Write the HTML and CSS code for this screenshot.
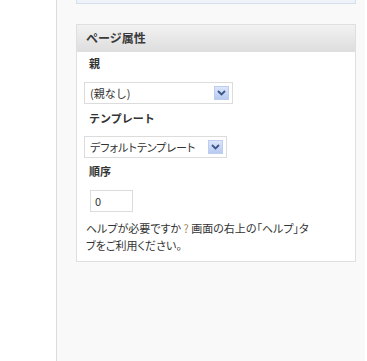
FILE: index.html
```html
<!DOCTYPE html>
<html lang="ja">
<head>
    <meta charset="UTF-8">
    <title>ページ属性</title>
    <link rel="stylesheet" href="styles.css">
</head>
<body>
    <div class="page">
        <div class="sidebar"></div>
        <div class="main">
            <div class="top-box"></div>

            <div class="postbox">
                <h3 class="postbox-title">ページ属性</h3>
                <div class="postbox-inside">
                    <p class="field-label">親</p>
                    <div class="select select-parent">
                        <span class="select-text">(親なし)</span>
                        <span class="select-btn">
                            <svg width="9" height="6" viewBox="0 0 9 6"><path d="M1 1 L4.5 4.5 L8 1" fill="none" stroke="#3d5688" stroke-width="1.8"/></svg>
                        </span>
                    </div>

                    <p class="field-label">テンプレート</p>
                    <div class="select select-template">
                        <span class="select-text">デフォルトテンプレート</span>
                        <span class="select-btn">
                            <svg width="9" height="6" viewBox="0 0 9 6"><path d="M1 1 L4.5 4.5 L8 1" fill="none" stroke="#3d5688" stroke-width="1.8"/></svg>
                        </span>
                    </div>

                    <p class="field-label">順序</p>
                    <input class="order-input" type="text" value="0">

                    <p class="help">ヘルプが必要ですか <span class="help-mark">?</span> 画面の右上の「ヘルプ」タ<br>ブをご利用ください。</p>
                </div>
            </div>
        </div>
    </div>
</body>
</html>
```
FILE: styles.css
```css
:root {
    --text-color: #333;
    --border-color: #dfdfdf;
    --bg-color: #f9f9f9;
}
body, html {
    margin: 0;
    padding: 0;
    height: 100%;
    font-family: "Noto Sans CJK JP", "Noto Sans", sans-serif;
    color: var(--text-color);
}
.page {
    display: flex;
    height: 100%;
}
.sidebar {
    width: 56px;
    background-color: #fff;
    border-right: 1px solid #dcdcdc;
}
.main {
    width: 309px;
    background-color: var(--bg-color);
    padding: 0 0 0 19px;
    box-sizing: border-box;
    border-right: 1px solid #fff;
}
.top-box {
    width: 280px;
    height: 4px;
    box-sizing: border-box;
    background-color: #eef3fa;
    border: 1px solid #d5dfeb;
    border-top: none;
    margin-bottom: 20px;
}
.postbox {
    width: 280px;
    box-sizing: border-box;
    background-color: #fff;
    border: 1px solid var(--border-color);
}
.postbox-title {
    margin: 0;
    height: 26px;
    line-height: 25px;
    padding-left: 9px;
    font-size: 12px;
    font-weight: 700;
    color: #3a3a3a;
    background: linear-gradient(to bottom, #f2f2f2, #dedede);
    border-bottom: 1px solid var(--border-color);
}
.postbox-inside {
    padding: 3px 10px 7px 7px;
}
.field-label {
    margin: 0;
    padding-left: 5px;
    font-size: 11px;
    font-weight: 700;
    line-height: 16px;
}
.select {
    display: flex;
    align-items: center;
    justify-content: space-between;
    height: 22px;
    box-sizing: border-box;
    border: 1px solid #dcdcdc;
    padding: 0 3px 0 5px;
    font-size: 11px;
}
.select-parent {
    width: 149px;
    margin: 11px 0 6px;
}
.select-template {
    width: 143px;
    margin: 10px 0 5px;
}
.select-template .select-text {
    font-feature-settings: "palt";
}
.select-btn {
    display: flex;
    align-items: center;
    justify-content: center;
    width: 15px;
    height: 14px;
    box-sizing: border-box;
    border: 1px solid #bccdee;
    background: linear-gradient(to bottom, #dce6fb, #b7caf1);
}
.order-input {
    display: block;
    width: 43px;
    height: 22px;
    box-sizing: border-box;
    margin: 11px 0 8px 6px;
    padding: 0 4px;
    border: 1px solid #dcdcdc;
    font-family: inherit;
    font-size: 11px;
    color: var(--text-color);
}
.help {
    margin: 0;
    padding-left: 2px;
    font-size: 11px;
    line-height: 17px;
    white-space: nowrap;
    font-feature-settings: "palt";
}
.help-mark {
    color: #a08a5a;
}
```
